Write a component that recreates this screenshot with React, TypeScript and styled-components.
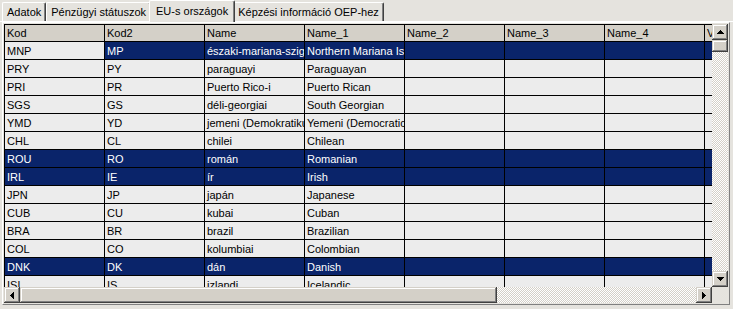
import styled, { createGlobalStyle } from "styled-components";

const GlobalStyle = createGlobalStyle`
  html, body {
    margin: 0;
    padding: 0;
  }
  body {
    background: #e5e3de;
    font-family: "Liberation Sans", Arial, sans-serif;
    font-size: 11px;
    color: #000;
  }
`;

const Window = styled.div`
  width: 733px;
  height: 309px;
  display: flex;
  flex-direction: column;
  overflow: hidden;
  background: #e5e3de;
`;

const TabStrip = styled.div`
  height: 21px;
  flex-shrink: 0;
  display: flex;
  align-items: flex-end;
  padding-left: 2px;
`;

const Tab = styled.div<{ $active?: boolean }>`
  position: relative;
  z-index: ${p => (p.$active ? 1 : 0)};
  box-sizing: border-box;
  height: ${p => (p.$active ? 22 : 19)}px;
  margin: ${p => (p.$active ? "0 -2px -1px" : "0")};
  padding: ${p => (p.$active ? "0 6px 2px" : "0 4px")};
  display: flex;
  align-items: center;
  white-space: nowrap;
  background: #e5e3de;
  border-top: 1px solid #fff;
  border-left: 1px solid #fff;
  border-right: 1px solid #404040;
  border-radius: 2px 2px 0 0;
  box-shadow: inset -1px 0 #808080;
`;

const Panel = styled.div`
  flex: 1;
  border-top: 1px solid #fff;
  padding: 0 3px 4px 2px;
`;

const Frame = styled.div`
  border-top: 1px solid #fff;
  border-left: 1px solid #fff;
  border-right: 1px solid #808080;
  border-bottom: 1px solid #808080;
  padding: 1px;
`;

const GridBox = styled.div`
  display: grid;
  grid-template-columns: 708px 16px;
  grid-template-rows: 263px 16px;
`;

const TableView = styled.div`
  overflow: hidden;
  background: #ececec;
`;

const Table = styled.div`
  width: 801px;
  border-left: 1px solid #000;
  border-top: 1px solid #000;
`;

const Row = styled.div<{ $selected?: boolean }>`
  display: flex;
  background: ${p => (p.$selected ? "#0a246a" : "#ececec")};
  color: ${p => (p.$selected ? "#fff" : "#000")};
`;

const HeaderRow = styled.div`
  display: flex;
  background: #d4d0c8;
`;

const Cell = styled.div<{ $focus?: boolean; $header?: boolean }>`
  box-sizing: border-box;
  width: 100px;
  height: ${p => (p.$header ? 17 : 18)}px;
  flex-shrink: 0;
  padding: 0 2px;
  display: flex;
  align-items: center;
  overflow: hidden;
  white-space: nowrap;
  border-right: 1px solid #000;
  border-bottom: 1px solid #000;
  ${p => (p.$focus ? "background: #ececec; color: #000;" : "")}
`;

const VScroll = styled.div`
  display: flex;
  flex-direction: column;
`;

const HScroll = styled.div`
  display: flex;
`;

const Track = styled.div`
  flex: 1;
  background-image: repeating-conic-gradient(#d4d0c8 0 25%, #fff 0 50%);
  background-size: 2px 2px;
`;

const Raised = styled.div`
  box-sizing: border-box;
  flex-shrink: 0;
  background: #d4d0c8;
  box-shadow: inset -1px -1px #404040, inset 1px 1px #d4d0c8,
    inset -2px -2px #808080, inset 2px 2px #fff;
`;

const ScrollBtn = styled(Raised)`
  width: 16px;
  height: 16px;
  display: flex;
  align-items: center;
  justify-content: center;
  svg {
    display: block;
  }
`;

const Thumb = styled(Raised)<{ $w?: number; $h?: number }>`
  width: ${p => (p.$w ? `${p.$w}px` : "16px")};
  height: ${p => (p.$h ? `${p.$h}px` : "16px")};
`;

const Corner = styled.div`
  background: #e5e3de;
`;

const Arrow = ({ d, w, h }: { d: string; w: number; h: number }) => (
  <svg width={w} height={h} viewBox={`0 0 ${w} ${h}`} shapeRendering="crispEdges">
    <path d={d} fill="#000" />
  </svg>
);

const columns = ["Kod", "Kod2", "Name", "Name_1", "Name_2", "Name_3", "Name_4", "Verzio"];

const rows = [
  { kod: "MNP", kod2: "MP", name: "északi-mariana-szigeteki", name1: "Northern Mariana Islander", sel: true, focus: true },
  { kod: "PRY", kod2: "PY", name: "paraguayi", name1: "Paraguayan" },
  { kod: "PRI", kod2: "PR", name: "Puerto Rico-i", name1: "Puerto Rican" },
  { kod: "SGS", kod2: "GS", name: "déli-georgiai", name1: "South Georgian" },
  { kod: "YMD", kod2: "YD", name: "jemeni (Demokratikus)", name1: "Yemeni (Democratic)" },
  { kod: "CHL", kod2: "CL", name: "chilei", name1: "Chilean" },
  { kod: "ROU", kod2: "RO", name: "román", name1: "Romanian", sel: true },
  { kod: "IRL", kod2: "IE", name: "ír", name1: "Irish", sel: true },
  { kod: "JPN", kod2: "JP", name: "japán", name1: "Japanese" },
  { kod: "CUB", kod2: "CU", name: "kubai", name1: "Cuban" },
  { kod: "BRA", kod2: "BR", name: "brazil", name1: "Brazilian" },
  { kod: "COL", kod2: "CO", name: "kolumbiai", name1: "Colombian" },
  { kod: "DNK", kod2: "DK", name: "dán", name1: "Danish", sel: true },
  { kod: "ISL", kod2: "IS", name: "izlandi", name1: "Icelandic" },
];

const tabs = ["Adatok", "Pénzügyi státuszok", "EU-s országok", "Képzési információ OEP-hez"];

export default function App() {
  return (
    <>
      <GlobalStyle />
      <Window>
        <TabStrip>
          {tabs.map((t, i) => (
            <Tab key={t} $active={i === 2}>
              {t}
            </Tab>
          ))}
        </TabStrip>
        <Panel>
          <Frame>
            <GridBox>
              <TableView>
                <Table>
                  <HeaderRow>
                    {columns.map(c => (
                      <Cell key={c} $header>
                        {c}
                      </Cell>
                    ))}
                  </HeaderRow>
                  {rows.map(r => (
                    <Row key={r.kod} $selected={r.sel}>
                      <Cell $focus={r.focus}>{r.kod}</Cell>
                      <Cell>{r.kod2}</Cell>
                      <Cell>{r.name}</Cell>
                      <Cell>{r.name1}</Cell>
                      <Cell />
                      <Cell />
                      <Cell />
                      <Cell />
                    </Row>
                  ))}
                </Table>
              </TableView>
              <VScroll>
                <ScrollBtn>
                  <Arrow w={7} h={4} d="M3 0h1v1h1v1h1v1h1v1H0V3h1V2h1V1h1z" />
                </ScrollBtn>
                <Thumb $h={12} />
                <Track />
                <ScrollBtn>
                  <Arrow w={7} h={4} d="M0 0h7v1H6v1H5v1H4v1H3V3H2V2H1V1H0z" />
                </ScrollBtn>
              </VScroll>
              <HScroll>
                <ScrollBtn>
                  <Arrow w={4} h={7} d="M3 0h1v7H3V6H2V5H1V4H0V3h1V2h1V1h1z" />
                </ScrollBtn>
                <Thumb $w={477} />
                <Track />
                <ScrollBtn>
                  <Arrow w={4} h={7} d="M0 0h1v1h1v1h1v1h1v1H3v1H2v1H1v1H0z" />
                </ScrollBtn>
              </HScroll>
              <Corner />
            </GridBox>
          </Frame>
        </Panel>
      </Window>
    </>
  );
}
